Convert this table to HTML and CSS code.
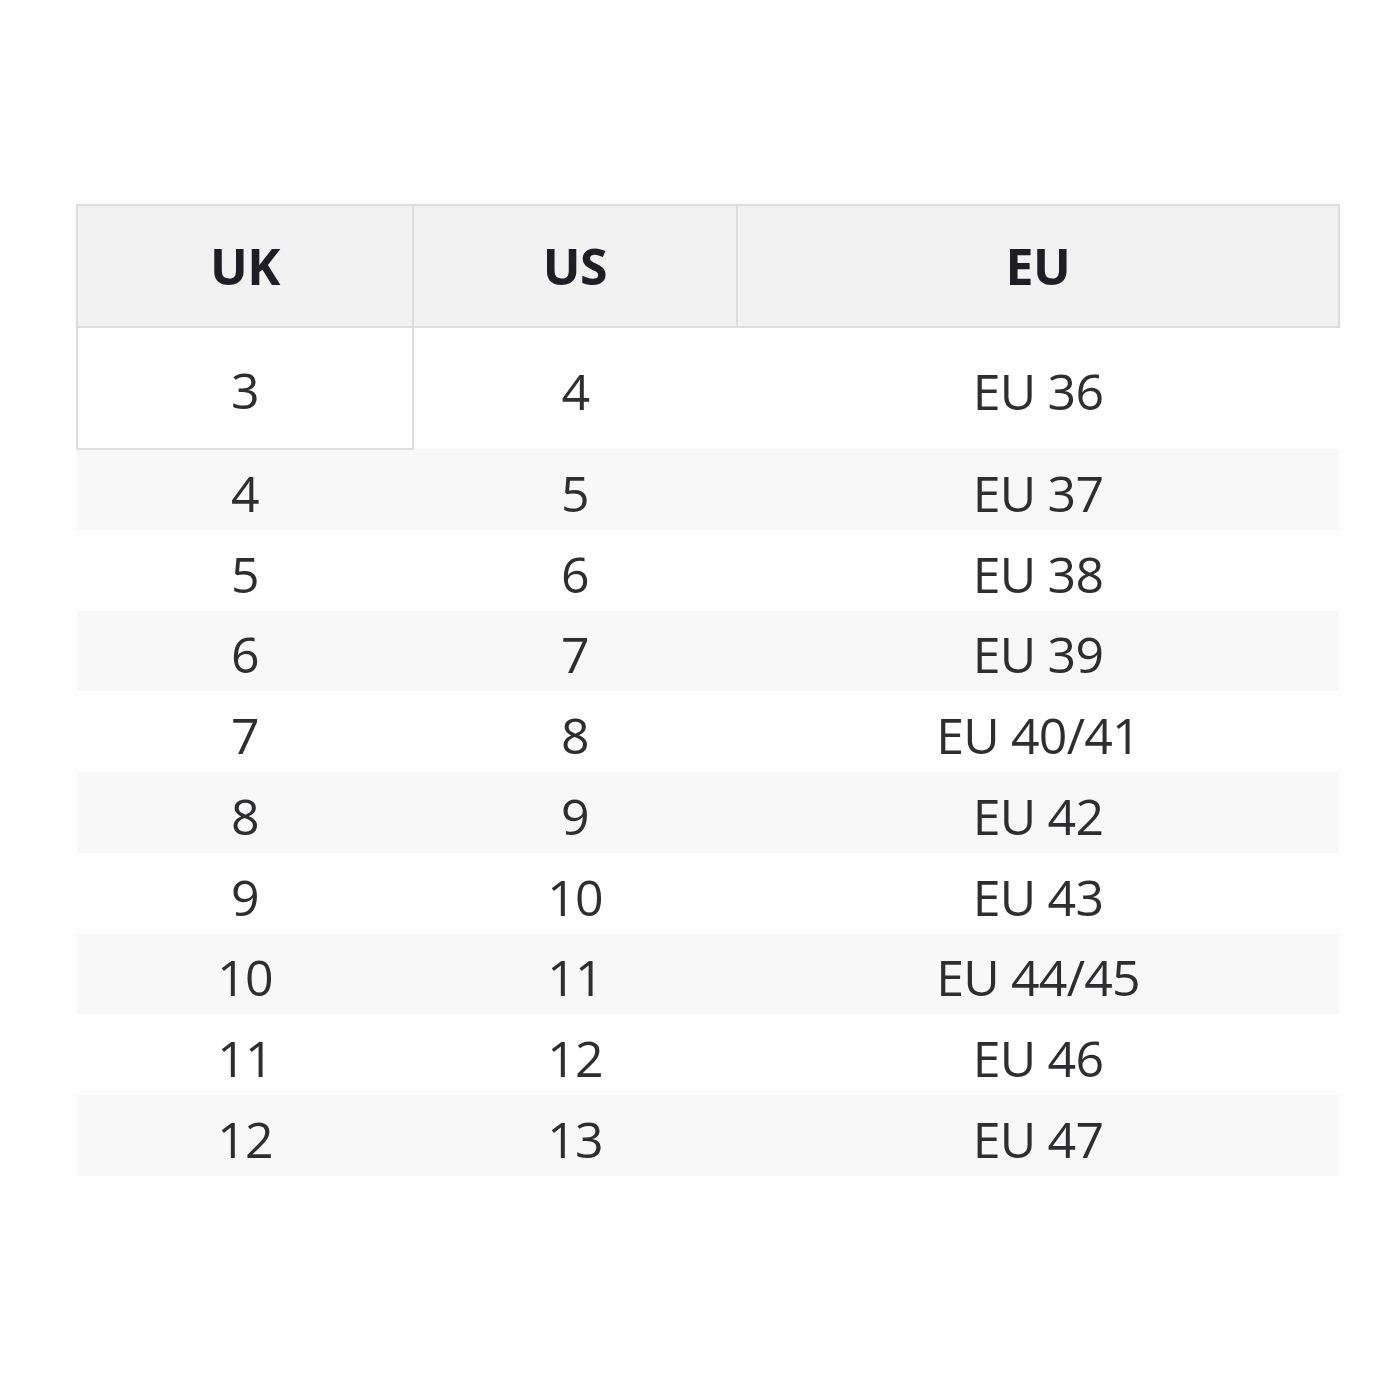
FILE: index.html
```html
<!DOCTYPE html>
<html>
<head>
<meta charset="utf-8">
<link rel="stylesheet" href="styles.css">
</head>
<body>
<div class="page">
<table class="sizes">
  <thead>
    <tr><th class="c-uk">UK</th><th class="c-us">US</th><th class="c-eu">EU</th></tr>
  </thead>
  <tbody>
    <tr class="first"><td class="boxed">3</td><td>4</td><td>EU 36</td></tr>
    <tr class="alt"><td>4</td><td>5</td><td>EU 37</td></tr>
    <tr><td>5</td><td>6</td><td>EU 38</td></tr>
    <tr class="alt"><td>6</td><td>7</td><td>EU 39</td></tr>
    <tr><td>7</td><td>8</td><td>EU 40/41</td></tr>
    <tr class="alt"><td>8</td><td>9</td><td>EU 42</td></tr>
    <tr><td>9</td><td>10</td><td>EU 43</td></tr>
    <tr class="alt"><td>10</td><td>11</td><td>EU 44/45</td></tr>
    <tr><td>11</td><td>12</td><td>EU 46</td></tr>
    <tr class="alt"><td>12</td><td>13</td><td>EU 47</td></tr>
  </tbody>
</table>
</div>
</body>
</html>
```

FILE: styles.css
```css
html, body {
  margin: 0;
  padding: 0;
  background: #fefefe;
}
.page {
  padding: 204px 60px 0 76px;
}
.sizes {
  border-collapse: collapse;
  width: 1264px;
  table-layout: fixed;
  font-family: "Open Sans", "Noto Sans", sans-serif;
  color: #2e2e30;
}
.sizes th {
  background: #f2f2f2;
  border: 2px solid #dedede;
  height: 120px;
  font-size: 50px;
  font-weight: 700;
  color: #1e1e24;
  text-align: center;
  padding: 0;
  letter-spacing: -0.5px;
}
.c-uk { width: 334px; }
.c-us { width: 322px; }
.sizes td {
  text-align: center;
  height: 80.75px;
  padding: 7px 0 0 0;
  font-size: 50px;
  font-weight: 400;
  letter-spacing: -0.8px;
  box-sizing: border-box;
}
.sizes tr.first td {
  height: 122px;
  padding: 4px 0 0 0;
}
.sizes td.boxed {
  border: 2px solid #dedede;
  border-top: none;
}
.sizes tr.alt td {
  background: #f8f8f8;
}
```
